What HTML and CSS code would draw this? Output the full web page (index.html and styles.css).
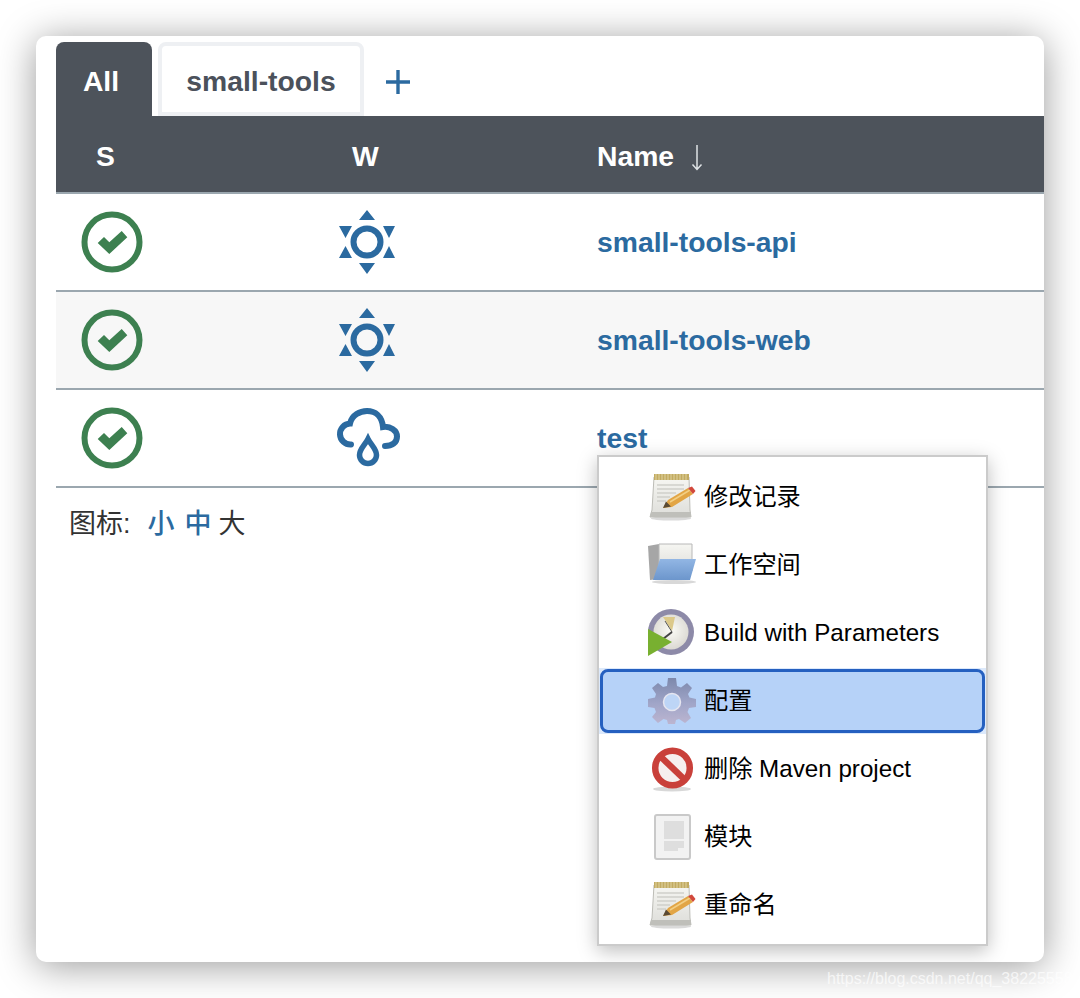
FILE: index.html
```html
<!DOCTYPE html>
<html lang="zh">
<head>
<meta charset="utf-8">
<title>Jenkins view</title>
<link rel="stylesheet" href="styles.css">
</head>
<body>
<svg class="defs" width="0" height="0" aria-hidden="true">
  <defs>
    <linearGradient id="paper" x1="0" y1="0" x2="0" y2="1"><stop offset="0" stop-color="#f6f6f2"/><stop offset="1" stop-color="#dededa"/></linearGradient>
    <linearGradient id="blue" x1="0" y1="0" x2="0" y2="1"><stop offset="0" stop-color="#92b6e4"/><stop offset="1" stop-color="#6c96cc"/></linearGradient>
    <linearGradient id="gear" x1="0" y1="0" x2="0" y2="1"><stop offset="0" stop-color="#7c88ab"/><stop offset=".55" stop-color="#a0a5c8"/><stop offset="1" stop-color="#bcb5d0"/></linearGradient>
    <radialGradient id="face" cx=".5" cy=".45" r=".6"><stop offset="0" stop-color="#fbfbf6"/><stop offset="1" stop-color="#d8d6d0"/></radialGradient>
    <symbol id="check" viewBox="0 0 64 64">
      <circle cx="32" cy="32" r="27.500" fill="none" stroke="#3d8050" stroke-width="6"/>
      <path d="M17.700 33L24 27L29.300 32.300L41.700 21L47.300 27.300L29.300 44Z" fill="#3d8050"/>
    </symbol>
    <symbol id="sun" viewBox="0 0 64 68">
      <circle cx="31" cy="34" r="13.500" fill="none" stroke="#2b6aa0" stroke-width="6"/>
      <path d="M31 2L39 12H23ZM31 66L39 55H23ZM3 18H16L9.500 30ZM59 18H47L53 30ZM9.500 38L3 50H16ZM53 38L59 50H47Z" fill="#2b6aa0"/>
    </symbol>
    <symbol id="notepad" viewBox="0 0 48 48">
      <ellipse cx="23" cy="45.500" rx="20" ry="2" fill="#dadada"/>
      <path d="M6 4H41L42 37L43 44H2L4 37Z" fill="url(#paper)" stroke="#bcbcb6"/>
      <path d="M3 39H43V44H2Z" fill="#bfbfba"/>
      <rect x="6" y="1" width="35" height="6" fill="#c2ab62"/>
      <path d="M8 1V7M11 1V7M14 1V7M17 1V7M20 1V7M23 1V7M26 1V7M29 1V7M32 1V7M35 1V7M38 1V7" stroke="#e4d8a8" stroke-width=".9"/>
      <path d="M9 12H36M9 16H36M9 20H28M9 24H22M9 28H18" stroke="#cfcfca" stroke-width="1.400"/>
      <path d="M20 27L40 15L45 21L24 34L15 35Z" fill="#e2a545"/>
      <path d="M22 29L42 17" stroke="#f3cf85" stroke-width="1.500"/>
      <path d="M40 15L44 13.500L47.500 18L45 21Z" fill="#d2483c"/>
      <path d="M18 28.500L15 35L23 33.500Z" fill="#5a4a34"/>
    </symbol>
  </defs>
</svg>

<main class="window">
  <nav class="tabs">
    <a class="tab tab-active">All</a>
    <a class="tab tab-idle">small-tools</a>
    <a class="tab-add" aria-label="add">
      <svg width="26" height="26" viewBox="0 0 26 26"><path d="M13 1V25M1 13H25" stroke="#2b6aa0" stroke-width="3.400"/></svg>
    </a>
  </nav>

  <section class="table">
    <div class="row head">
      <div class="cell s">S</div>
      <div class="cell w">W</div>
      <div class="cell n">Name<svg class="arrow" width="12" height="26" viewBox="0 0 12 26"><path d="M6 0V24M1.500 19.500L6 24.500L10.500 19.500" fill="none" stroke="#dfe3e6" stroke-width="1.500"/></svg></div>
    </div>

    <div class="row">
      <div class="cell s"><svg class="ic" width="64" height="64"><use href="#check"/></svg></div>
      <div class="cell w"><svg class="ic" width="64" height="68"><use href="#sun"/></svg></div>
      <div class="cell n"><a class="job">small-tools-api</a></div>
    </div>

    <div class="row alt">
      <div class="cell s"><svg class="ic" width="64" height="64"><use href="#check"/></svg></div>
      <div class="cell w"><svg class="ic" width="64" height="68"><use href="#sun"/></svg></div>
      <div class="cell n"><a class="job">small-tools-web</a></div>
    </div>

    <div class="row">
      <div class="cell s"><svg class="ic" width="64" height="64"><use href="#check"/></svg></div>
      <div class="cell w"><svg class="ic" width="64" height="60" viewBox="0 0 64 60"><path d="M15 36.500A10.500 10.500 0 0 1 14 15.500C16 7 24 3 31 3C39 3 46 8 47 19C54 18 61 22 61 28.500C61 35 56 38 49 38" fill="none" stroke="#2b6aa0" stroke-width="6" stroke-linecap="round"/><path d="M32 31C29 37 23.500 41 23.500 47A8.500 8.500 0 0 0 40.500 47C40.500 41 35 37 32 31Z" fill="none" stroke="#2b6aa0" stroke-width="5.500"/></svg></div>
      <div class="cell n"><a class="job">test</a></div>
    </div>
  </section>

  <p class="legend">图标:<span class="sizes"><a class="size">小</a><a class="size">中</a><span class="size current">大</span></span></p>

  <div class="menu" role="menu">
    <div class="item"><svg class="mi" viewBox="0 0 48 48"><use href="#notepad"/></svg>修改记录</div>
    <div class="item"><svg class="mi" viewBox="0 0 48 48"><ellipse cx="26" cy="41" rx="22" ry="2" fill="#d8d8d8"/><path d="M0 5L11 3V38L2 39Z" fill="#a6a6a6"/><path d="M11 3H44V30H11Z" fill="url(#paper)" stroke="#b8b8b8"/><path d="M12 18H48L42 39H5Z" fill="url(#blue)"/></svg>工作空间</div>
    <div class="item"><svg class="mi" viewBox="0 0 48 48"><circle cx="23" cy="23" r="23" fill="#8d8aa8"/><circle cx="23" cy="23" r="17.500" fill="url(#face)"/><path d="M24 22L15 8H27Z" fill="#dcc98a"/><path d="M24 23L17 12" stroke="#555" stroke-width="1"/><path d="M24 23L15 30" stroke="#444" stroke-width="2"/><path d="M0 20L24 33L0 47Z" fill="#78b030"/></svg>Build with Parameters</div>
    <div class="item-wrap">
      <div class="item item-focus"><svg class="mi" viewBox="0 0 48 48"><path d="M20 1H28L29 9L33 10.500L39 6L44 11L40 17L41.500 20.500L48 22V30L41 31L39.500 35L43 41L37 46L31 42L28 43L27 47H20L19 43L15.500 42L10 46L4 40L8 35L6.500 31L0 30V22L7 20.500L8 17L4 11L10 6L15 10L19 9Z" fill="url(#gear)"/><circle cx="24" cy="25" r="8.500" fill="#bdd5f6" stroke="#e6e6f0" stroke-width="1.500"/></svg>配置</div>
    </div>
    <div class="item"><svg class="mi" viewBox="0 0 48 48"><ellipse cx="24" cy="44" rx="19" ry="2.500" fill="#d8d8d8"/><circle cx="24.500" cy="23" r="17.300" fill="#f6efee" stroke="#c9403a" stroke-width="6.500"/><path d="M12 11L37 35" stroke="#c9403a" stroke-width="6.500"/></svg>删除 Maven project</div>
    <div class="item"><svg class="mi" viewBox="0 0 48 48"><rect x="7" y="2" width="35" height="44" rx="2" fill="#f2f2f2" stroke="#c9c9c9" stroke-width="2"/><path d="M16 8H36V26H16Z" fill="#dedede"/><path d="M16 28H36V35H30V38H16Z" fill="#dedede"/></svg>模块</div>
    <div class="item"><svg class="mi" viewBox="0 0 48 48"><use href="#notepad"/></svg>重命名</div>
  </div>
</main>

<span class="mark">https://blog.csdn.net/qq_38225558</span>
</body>
</html>
```

FILE: styles.css
```css
* { box-sizing: border-box; }
html, body { margin: 0; height: 998px; overflow: hidden; background: #fff; }
body { position: relative; padding: 36px; font-family: "Liberation Sans", "Noto Sans CJK SC", sans-serif; }
.defs { position: absolute; }

.window {
  position: relative;
  width: 1008px;
  height: 926px;
  padding: 6px 0 0 20px;
  background: #fff;
  border-radius: 10px;
  box-shadow: 0 4px 38px rgba(0, 0, 0, .4);
  contain: paint;
}

.tabs { display: flex; align-items: stretch; height: 74px; gap: 6px; }
.tab {
  display: flex;
  align-items: center;
  justify-content: center;
  padding-top: 4px;
  font-size: 28.3px;
  font-weight: 700;
  border-radius: 8px 8px 0 0;
}
.tab-active { width: 96px; padding-right: 6px; background: #4d535b; color: #fff; }
.tab-idle { width: 206px; border: 4px solid #eef0f3; color: #4b515b; }
.tab-add { display: flex; align-items: center; margin-left: 15px; padding-top: 6px; }

.table { width: 988px; }
.row {
  display: grid;
  grid-template-columns: 240px 300px 1fr;
  align-items: center;
  height: 98px;
  border-bottom: 2px solid #9ba7af;
}
.row.alt { background: #f7f7f7; }
.row.head { height: 78px; padding-top: 4px; background: #4d535b; color: #fff; font-size: 28.3px; font-weight: 700; }
.cell { display: flex; align-items: center; }
.head .s { padding-left: 40px; }
.head .w { padding-left: 56px; }
.head .n { padding-left: 1px; }
.row .s .ic { margin-left: 24px; }
.row .w .ic { margin-left: 40px; }
.arrow { margin-left: 17px; margin-top: 4px; }
.job { margin-left: 1px; font-size: 28.3px; font-weight: 700; line-height: 34px; color: #2b6aa0; }

.legend { display: flex; align-items: baseline; margin: 20px 0 0 13px; font-size: 27px; line-height: 32px; color: #333; }
.sizes { display: flex; margin-left: 17px; gap: 10px; }
.size { width: 27px; font-weight: 500; color: #2b6aa0; }
.size.current { margin-left: -3px; font-weight: 400; color: #333; }

.menu {
  position: absolute;
  left: 561px;
  top: 419px;
  width: 391px;
  height: 491px;
  padding: 6px 0 0;
  background: #fff;
  border: 2px solid #cbcbcb;
  box-shadow: 0 5px 18px rgba(0, 0, 0, .26);
  font-size: 24.2px;
  line-height: 30px;
  color: #000;
}
.item { display: flex; align-items: center; gap: 8px; height: 68px; padding-left: 49px; white-space: nowrap; }
.mi { width: 48px; height: 48px; flex: none; filter: blur(.6px); }
.item-wrap { height: 66px; margin: 1px 0; padding: 1px; background: #dce9fb; }
.item-focus { height: 64px; padding-left: 45px; background: #b6d2f8; border: 3px solid #2560c0; border-radius: 8px; }

.mark { position: absolute; left: 827px; top: 970px; font-size: 16px; color: rgba(255, 255, 255, .7); white-space: nowrap; }
```
